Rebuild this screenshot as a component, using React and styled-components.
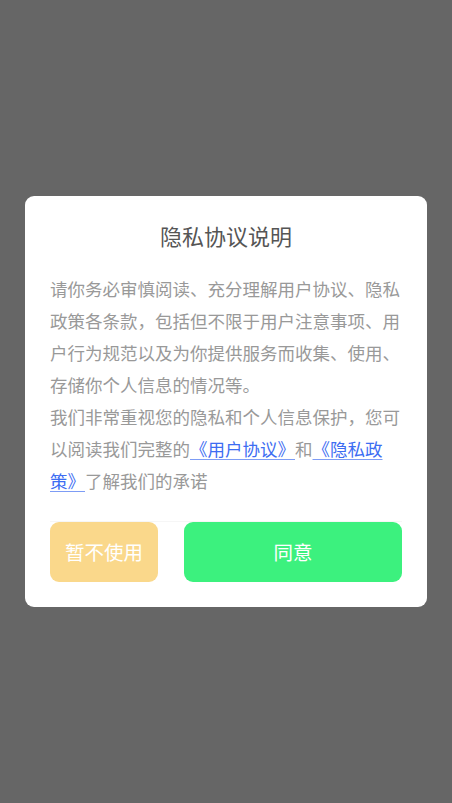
import React from "react";
import styled, { createGlobalStyle } from "styled-components";

const GlobalStyle = createGlobalStyle`
  html, body {
    margin: 0;
    padding: 0;
    background: #666666;
  }
  * { box-sizing: border-box; }
`;

const Overlay = styled.div`
  width: 100vw;
  height: 100vh;
  background: #666666;
  display: flex;
  align-items: center;
  justify-content: center;
  font-family: "Noto Sans CJK SC", "Noto Sans", sans-serif;
`;

const Card = styled.div`
  width: 402px;
  background: #ffffff;
  border-radius: 9px;
  padding: 23px 25px 25px;
  display: flex;
  flex-direction: column;
`;

const Title = styled.h2`
  margin: 0;
  font-size: 22px;
  line-height: 33px;
  font-weight: 400;
  color: #555555;
  text-align: center;
`;

const Body = styled.p`
  margin: 21px 0 0;
  font-size: 17.5px;
  line-height: 31.9px;
  color: #999999;
  text-align: left;
`;

const Link = styled.a`
  color: #3d6df2;
  text-decoration: underline;
  text-decoration-color: #7d9cf5;
  text-underline-offset: 3px;
`;

const ButtonRow = styled.div`
  margin-top: 24px;
  border-top: 1px solid #f6f6f6;
  display: flex;
  gap: 26px;
`;

const Button = styled.button`
  flex: ${(p) => (p.$primary ? "0 0 218px" : "0 0 108px")};
  height: 60px;
  border: none;
  border-radius: 9px;
  background: ${(p) => (p.$primary ? "#3cf17e" : "#fad88b")};
  color: #ffffff;
  font-family: inherit;
  font-size: 19.5px;
  display: flex;
  align-items: center;
  justify-content: center;
  padding: 0;
  cursor: pointer;
`;

export default function App() {
  return (
    <>
      <GlobalStyle />
      <Overlay>
        <Card>
          <Title>隐私协议说明</Title>
          <Body>
            请你务必审慎阅读、充分理解用户协议、隐私政策各条款，包括但不限于用户注意事项、用户行为规范以及为你提供服务而收集、使用、存储你个人信息的情况等。
            <br />
            我们非常重视您的隐私和个人信息保护，您可以阅读我们完整的
            <Link href="#">《用户协议》</Link>和<Link href="#">《隐私政策》</Link>了解我们的承诺
          </Body>
          <ButtonRow>
            <Button>暂不使用</Button>
            <Button $primary>同意</Button>
          </ButtonRow>
        </Card>
      </Overlay>
    </>
  );
}
